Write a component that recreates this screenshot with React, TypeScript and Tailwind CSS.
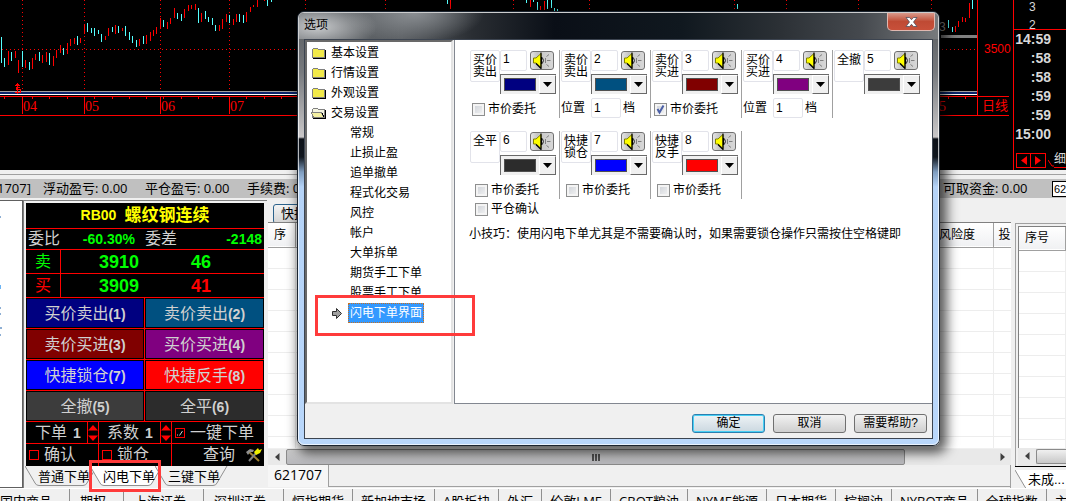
import { useState } from 'react';
import type { ReactNode } from 'react';

type Candle = [x: number, top: number, bottom: number, up: 0 | 1];

// x, top, bottom, 1 = red / 0 = cyan
const candles: Candle[] = [
  [1, 37, 63, 0], [4, 58, 67, 0], [8, 51, 65, 1], [11, 52, 61, 0], [15, 51, 58, 1], [18, 60, 73, 1],
  [22, 51, 67, 0], [25, 60, 68, 1], [29, 62, 70, 0], [32, 58, 69, 1], [35, 54, 60, 1], [39, 52, 61, 0],
  [42, 55, 63, 1], [46, 52, 62, 1], [49, 53, 65, 0], [53, 56, 66, 1], [56, 50, 58, 1], [60, 45, 53, 1],
  [63, 48, 55, 0], [67, 43, 54, 1], [70, 39, 46, 1], [74, 38, 44, 1], [77, 36, 45, 0], [80, 38, 43, 1],
  [84, 24, 34, 1], [87, 23, 32, 0], [91, 28, 33, 0], [94, 28, 36, 0], [98, 30, 34, 0], [101, 34, 42, 0],
  [105, 36, 40, 1], [108, 28, 36, 1], [112, 27, 32, 0], [115, 25, 34, 1], [118, 26, 33, 0], [122, 28, 31, 1],
  [125, 26, 36, 0], [129, 32, 40, 0], [132, 36, 43, 0], [136, 40, 47, 0], [139, 39, 46, 1], [143, 36, 44, 0],
  [146, 35, 44, 1], [150, 32, 41, 1], [153, 30, 36, 1], [156, 27, 34, 1], [160, 18, 29, 1], [163, 20, 27, 0],
  [167, 22, 29, 1], [170, 18, 24, 1], [174, 8, 18, 1], [177, 13, 19, 0], [181, 14, 21, 0], [184, 9, 18, 1],
  [188, 5, 11, 1], [191, 5, 9, 1], [195, 4, 10, 1], [198, 8, 23, 0], [201, 13, 22, 1], [205, 11, 19, 0],
  [208, 17, 22, 0], [212, 18, 25, 0], [215, 25, 31, 0], [219, 25, 31, 1], [222, 19, 29, 1], [226, 14, 22, 1],
  [229, 15, 23, 0], [233, 19, 25, 1], [236, 14, 22, 1], [239, 14, 22, 0], [243, 15, 23, 0], [246, 12, 22, 1],
  [250, 7, 12, 1], [253, 5, 7, 1], [257, 0, 7, 1], [264, 0, 1, 1], [267, 0, 6, 0], [271, 0, 2, 0],
  [447, 0, 4, 0], [450, 0, 9, 1], [526, 0, 3, 0], [530, 0, 7, 1], [533, 0, 2, 0], [537, 2, 10, 0],
  [540, 6, 10, 1], [544, 1, 10, 1], [547, 0, 9, 0], [551, 0, 8, 0], [554, 8, 11, 0], [557, 9, 11, 0],
  [737, 4, 9, 0], [948, 20, 28, 0], [952, 27, 32, 0], [955, 26, 32, 1], [958, 21, 27, 1], [962, 17, 22, 1],
  [965, 18, 22, 1], [969, 3, 18, 1], [972, 0, 9, 0],
];

const gridLines = [22, 84, 160, 229, 305, 385, 450, 513, 589, 734, 786, 858, 931];
const months = [
  { x: 22, label: '04' },
  { x: 84, label: '05' },
  { x: 160, label: '06' },
  { x: 229, label: '07' },
];
const ticks = [4, 32, 49, 67, 94, 112, 129, 146, 163, 181, 198, 212, 246, 264, 281, 948, 965];

const quoteTimes = ['14:59', ':58', ':58', ':59', ':59', '15:00'];

const orderButtons = [
  { text: '买价卖出', key: '(1)', color: 'bg-[#000080]' },
  { text: '卖价卖出', key: '(2)', color: 'bg-[#005080]' },
  { text: '卖价买进', key: '(3)', color: 'bg-[#800000]' },
  { text: '买价买进', key: '(4)', color: 'bg-[#800080]' },
  { text: '快捷锁仓', key: '(7)', color: 'bg-[#0000ff]' },
  { text: '快捷反手', key: '(8)', color: 'bg-[#ff0000]' },
  { text: '全撤', key: '(5)', color: 'bg-[#3c3c3c]' },
  { text: '全平', key: '(6)', color: 'bg-[#2c2c2c]' },
];

const folders = ['基本设置', '行情设置', '外观设置', '交易设置'];
const pages = ['常规', '止损止盈', '追单撤单', '程式化交易', '风控', '帐户', '大单拆单', '期货手工下单', '股票手工下单', '闪电下单界面'];

interface KeyConfig {
  id: string;
  label: string;
  value: string;
  color: string;
  extra?: 'market' | 'position';
  checked?: boolean;
}

const keyRowOne: KeyConfig[] = [
  { id: 'k1', label: '买价卖出', value: '1', color: 'bg-[#000080]', extra: 'market' },
  { id: 'k2', label: '卖价卖出', value: '2', color: 'bg-[#005080]', extra: 'position' },
  { id: 'k3', label: '卖价买进', value: '3', color: 'bg-[#800000]', extra: 'market', checked: true },
  { id: 'k4', label: '买价买进', value: '4', color: 'bg-[#800080]', extra: 'position' },
  { id: 'k5', label: '全撤', value: '5', color: 'bg-[#3c3c3c]' },
];
const keyRowTwo: KeyConfig[] = [
  { id: 'k6', label: '全平', value: '6', color: 'bg-[#2c2c2c]', extra: 'market' },
  { id: 'k7', label: '快捷锁仓', value: '7', color: 'bg-[#0000ff]', extra: 'market' },
  { id: 'k8', label: '快捷反手', value: '8', color: 'bg-[#ff0000]', extra: 'market' },
];

const wideMarkets = ['期权', '上海证券', '深圳证券'];
const markets = ['恒指期货', '新加坡市场', 'A股板块', '外汇', '伦敦LME', 'CBOT粮油', 'NYME能源', '日本期货', '棕榈油', 'NYBOT商品', '全球指数', '主要'];

function Chart() {
  return (
    <svg className="block h-full w-full" shapeRendering="crispEdges">
      <line x1="0" x2="100%" y1="49.5" y2="49.5" stroke="#f00" strokeDasharray="1 3" strokeDashoffset="-2" />
      {gridLines.map((x) => (
        <line key={x} x1={x + 0.5} x2={x + 0.5} y1="0" y2="90" stroke="#f00" strokeDasharray="1 3" />
      ))}
      {candles.map(([x, top, bottom, up]) => (
        <rect key={x} x={x} y={top} width="1" height={bottom - top} fill={up ? '#f00' : '#5ff'} />
      ))}
      <rect x="0" y="91" width="100%" height="1" fill="#a0a0a0" />
      <rect x="0" y="92" width="100%" height="2" fill="#0a246a" />
      <rect x="0" y="94" width="100%" height="1" fill="#fff" />
      <path d="M15 85h5M16 84h3M17 83h1M20 87h-4v2h4v3h-5M17 86v8" stroke="#f00" fill="none" />
      <rect x="0" y="96" width="100%" height="1" fill="#f00" />
      <rect x="0" y="115" width="100%" height="1" fill="#f00" />
      {ticks.map((x) => (
        <rect key={x} x={x} y="97" width="1" height="2" fill="#f00" />
      ))}
      {months.map((m) => (
        <g key={m.label} fill="#f00">
          <rect x={m.x} y="96" width="1" height="18" />
          <text x={m.x + 1} y="111" fontSize="14" fontFamily="Liberation Serif, serif">{m.label}</text>
        </g>
      ))}
      <text x="939" y="31" fontSize="12" fill="#909090" fontFamily="Liberation Sans, sans-serif">3</text>
      <rect x="941" y="35" width="37" height="3" fill="#808080" />
      <text x="939" y="111" fontSize="14" fill="#f00" fontFamily="Liberation Serif, serif">5</text>
    </svg>
  );
}

function PriceAxis() {
  return (
    <div className="w-9 shrink-0 flex flex-col text-[#f00]">
      <div className="h-24 border-l border-[#f00] pt-[41px] pl-[6px] text-[12px] leading-4">3500</div>
      <div className="h-5 mr-1 border-y border-l border-[#f00] pl-1 text-[13px] leading-[18px]">日线</div>
    </div>
  );
}

function QuoteList() {
  return (
    <div className="w-[53px] shrink-0 border-l border-[#f00] flex flex-col text-[#d8d8d8]">
      <div className="h-[30px] border-b border-[#f00] flex flex-col pl-[15px] text-[12px]">
        <span className="h-[15px] leading-[14px]">3</span>
        <span className="h-[14px] leading-[20px] overflow-hidden">2</span>
      </div>
      <div className="w-[37px] text-right font-bold text-[14px] leading-[19px]">
        {quoteTimes.map((t, i) => (
          <div key={i}>{t}</div>
        ))}
      </div>
      <div className="mt-2 pl-[2px] flex items-center">
        <button aria-label="上一页" className="h-[15px] w-4 border border-[#f00] flex items-center justify-center">
          <svg width="6" height="9" viewBox="0 0 6 9"><path d="M6 0v9L0 4.500z" fill="#f00" /></svg>
        </button>
        <button aria-label="下一页" className="h-[15px] w-[15px] border border-l-0 border-[#f00] flex items-center justify-center">
          <svg width="6" height="9" viewBox="0 0 6 9"><path d="M0 0v9l6-4.500z" fill="#f00" /></svg>
        </button>
        <svg width="6" height="13" viewBox="0 0 6 13" className="ml-[2px] shrink-0"><path d="M0 6l4 6h2" fill="none" stroke="#f00" /></svg>
        <span className="text-[12px] leading-[15px] border-b border-[#f00] shrink-0">细</span>
      </div>
    </div>
  );
}

function StatusItem({ name, value }: { name: string; value: string }) {
  return <span className="w-[102px] shrink-0 whitespace-nowrap">{name}: {value}</span>;
}

function StatusBar() {
  return (
    <div className="h-[30px] shrink-0 bg-[#f0f0f0] pt-1">
      <div className="h-px bg-[#a0a0a0]" />
      <div className="h-1 bg-[#f0f0f0]" />
      <div className="h-[19px] bg-[#c0c0c0] flex items-center text-[13px] leading-[19px] text-black font-['Open_Sans','Noto_Sans_CJK_SC',sans-serif]">
        <span className="w-[43px] shrink-0 pr-3 flex justify-end">1707]</span>
        <StatusItem name="浮动盈亏" value="0.00" />
        <StatusItem name="平仓盈亏" value="0.00" />
        <StatusItem name="手续费" value="0.00" />
        <span className="ml-auto w-[109px] shrink-0">可取资金: 0.00</span>
        <select aria-label="账号" className="h-4 w-[14px] shrink-0 appearance-none border border-r-0 border-black bg-white pl-px text-[11px] leading-[14px] font-['Liberation_Sans',sans-serif] text-clip">
          <option>621707</option>
        </select>
      </div>
    </div>
  );
}

function RedCheck({ id, label, defaultChecked }: { id: string; label: string; defaultChecked?: boolean }) {
  return (
    <label htmlFor={id} className="flex items-center gap-[5px] pl-[3px] whitespace-nowrap">
      <span className="relative block size-[10px]">
        <input id={id} type="checkbox" defaultChecked={defaultChecked} className="peer block size-[10px] appearance-none border border-[#f00]" />
        <svg viewBox="0 0 10 10" className="absolute inset-0 hidden size-[10px] peer-checked:block" fill="none" stroke="#d0d0d0">
          <path d="M2 7h1M4.500 7.500L7.500 3" />
        </svg>
      </span>
      {label}
    </label>
  );
}

function Spinner() {
  return (
    <div className="w-3 shrink-0 border-x border-[#f00] flex flex-col items-center justify-center gap-1">
      <button aria-label="增加"><svg width="10" height="6" viewBox="0 0 10 6" className="block"><path d="M5 0l5 5.500H0z" fill="#f00" /></svg></button>
      <button aria-label="减少"><svg width="10" height="6" viewBox="0 0 10 6" className="block"><path d="M5 6l5-5.500H0z" fill="#f00" /></svg></button>
    </div>
  );
}

function OrderTab({ children, active }: { children: ReactNode; active?: boolean }) {
  return (
    <button className="relative h-[21px] w-[65px] shrink-0 pl-[13px] text-left text-[13px] leading-5 whitespace-nowrap text-black">
      <svg width="75" height="20" viewBox="0 0 75 20" className="absolute top-0 left-0">
        <path d="M0 0L10 17Q11 19.500 14 19.500H58Q61 19.500 62 17L72 0" fill={active ? '#fff' : '#f0f0f0'} stroke="#909090" />
      </svg>
      <span className="relative">{children}</span>
    </button>
  );
}

function OrderPanel() {
  return (
    <div className="w-[244px] shrink-0 border-t border-l border-[#808080] flex flex-col">
      <div className="mt-[2px] ml-[2px] mr-[3px] bg-black text-[16px] text-[#d0d0d0]">
        <div className="h-[26px] border-b border-[#f00] flex items-center justify-center gap-2 font-bold text-[17px] text-[#ff0]">
          <span className="text-[14px]">RB00</span>
          <span>螺纹钢连续</span>
        </div>
        <div className="h-[21px] border-b border-[#f00] flex items-center px-[2px] leading-5">
          <span>委比</span>
          <span className="w-[75px] text-right font-bold text-[14px] text-[#0f0]">-60.30%</span>
          <span className="ml-[10px]">委差</span>
          <span className="ml-auto font-bold text-[14px] text-[#0f0]">-2148</span>
        </div>
        <div className="h-6 border-b border-[#f00] grid grid-cols-[35px_116px_48px_1fr] text-center leading-6 text-[#0f0]">
          <span className="border-r border-[#f00]">卖</span>
          <span className="font-bold text-[18px]">3910</span>
          <span className="font-bold text-[18px]">46</span>
        </div>
        <div className="h-6 border-b border-[#f00] grid grid-cols-[35px_116px_48px_1fr] text-center leading-6 text-[#f00]">
          <span className="border-r border-[#f00]">买</span>
          <span className="font-bold text-[18px] text-[#0f0]">3909</span>
          <span className="font-bold text-[18px]">41</span>
        </div>
        <div className="grid grid-cols-2">
          {orderButtons.map((b) => (
            <div key={b.key} className="h-[31px] border-b border-[#f00] odd:border-r p-px">
              <button className={`h-full w-full pt-px leading-[27px] ${b.color}`}>
                {b.text}<b className="text-[14px]">{b.key}</b>
              </button>
            </div>
          ))}
        </div>
        <div className="h-[21px] flex leading-5">
          <div className="w-[61px] shrink-0 pl-[9px] flex items-center gap-[6px]">下单<b className="text-[14px]">1</b></div>
          <Spinner />
          <div className="w-[61px] shrink-0 pl-[8px] flex items-center gap-[6px]">系数<b className="text-[14px]">1</b></div>
          <Spinner />
          <RedCheck id="oneKey" label="一键下单" defaultChecked />
        </div>
        <div className="h-[23px] border-t border-[#f00] flex leading-[20px]">
          <div className="w-[73px] border-r border-[#f00] flex"><RedCheck id="confirm" label="确认" /></div>
          <div className="w-[73px] border-r border-[#f00] flex"><RedCheck id="lock" label="锁仓" /></div>
          <div className="grow flex items-center justify-end gap-[11px] pr-[2px]">
            <button>查询</button>
            <svg width="16" height="14" viewBox="0 0 16 14">
              <path d="M2 3l11 10" stroke="#a08030" strokeWidth="2" />
              <path d="M0 4l4-3 4 1-1 2-3 0-2 3z" fill="#909090" />
              <path d="M3 13l8-9" stroke="#808080" strokeWidth="2" />
              <path d="M8 4l4-4 1 2 3-1-2 4-4 2z" fill="#ee0" />
            </svg>
          </div>
        </div>
      </div>
      <div className="ml-px flex">
        <OrderTab>普通下单</OrderTab>
        <OrderTab active>闪电下单</OrderTab>
        <OrderTab>三键下单</OrderTab>
      </div>
    </div>
  );
}

function ArrowLeft() {
  return <svg width="5" height="8" viewBox="0 0 5 8"><path d="M4.500 0v8L0 4z" fill="#404040" /></svg>;
}

function ArrowRight() {
  return <svg width="5" height="8" viewBox="0 0 5 8"><path d="M.5 0v8L5 4z" fill="#404040" /></svg>;
}

function PositionTable() {
  return (
    <div className="min-w-0 grow flex flex-col pl-px">
      <div className="h-[22px] shrink-0 pt-px pl-[5px]">
        <button className="h-5 w-16 rounded-[3px] border border-[#2c628b] bg-linear-to-b from-[#f4f4f4] to-[#d4d4d4] pl-[7px] text-left text-[13px] leading-[18px]">快捷键</button>
      </div>
      <div className="min-h-0 grow overflow-hidden border-t border-[#808080] bg-white mr-[2px]">
        <table className="w-full table-fixed border-collapse text-left text-[12px]">
          <colgroup>
            <col className="w-[27px]" />
            <col />
            <col className="w-[58px]" />
            <col className="w-[18px]" />
          </colgroup>
          <thead>
            <tr className="h-6 border-b border-[#a0a0a0] bg-linear-to-b from-white to-[#f0f1f3]">
              <th className="border-r border-[#a0a0a0] pl-[6px] font-normal">序</th>
              <th />
              <th className="border-r border-[#a0a0a0] pl-1 font-normal">风险度</th>
              <th className="pl-[5px] font-normal whitespace-nowrap">投</th>
            </tr>
          </thead>
          <tbody>
            {Array.from({ length: 10 }, (_, i) => (
              <tr key={i} className="h-[21px] border-b border-[#ededed]">
                <td className="border-r border-[#ededed]" />
                <td />
                <td className="border-r border-[#ededed]" />
                <td />
              </tr>
            ))}
          </tbody>
        </table>
      </div>
      <div className="h-4 mt-px mr-[2px] shrink-0 bg-[#e9e9e9] flex items-center">
        <button aria-label="向左滚动" className="w-[18px] flex justify-center"><ArrowLeft /></button>
        <div className="h-full w-5/6 rounded-[2px] border border-[#8a8a8a] bg-linear-to-b from-[#c8c8c8] to-[#b8b8bc] flex items-center justify-center gap-px">
          <i className="h-[7px] w-[2px] bg-[#505050]" />
          <i className="h-[7px] w-[2px] bg-[#505050]" />
          <i className="h-[7px] w-[2px] bg-[#505050]" />
        </div>
        <button aria-label="向右滚动" className="ml-auto w-[18px] flex justify-center"><ArrowRight /></button>
      </div>
      <div className="h-[23px] mr-[2px] shrink-0 flex border-r border-[#a0a0a0]">
        <button className="h-[22px] w-[61px] shrink-0 border-r border-[#a0a0a0] bg-[#f6f6f6] text-[14px] leading-[18px] pb-[2px] font-['Open_Sans',sans-serif]">621707</button>
        <div className="h-[22px] grow border-b border-[#a0a0a0]" />
      </div>
    </div>
  );
}

function OrdersTable() {
  return (
    <div className="w-[53px] shrink-0 flex flex-col pl-[2px] pt-[23px]">
      <div className="min-h-0 grow flex flex-col border-t border-l border-[#a0a0a0] pt-[2px] pl-[2px]">
        <div className="min-h-0 grow overflow-hidden border-t border-l border-[#808080] bg-white">
          <table className="w-full table-fixed border-collapse text-left text-[12px]">
            <thead>
              <tr className="h-[23px] border-b border-[#a0a0a0] bg-linear-to-b from-white to-[#f0f1f3]">
                <th className="w-[46px] border-r border-[#a0a0a0] pl-[6px] font-normal whitespace-nowrap">序号</th>
                <th />
              </tr>
            </thead>
            <tbody>
              {Array.from({ length: 10 }, (_, i) => (
                <tr key={i} className="h-[21px] border-b border-[#ededed]">
                  <td className="border-r border-[#ededed]" />
                  <td />
                </tr>
              ))}
            </tbody>
          </table>
        </div>
        <div className="h-[18px] shrink-0 bg-[#e9e9e9] flex items-center pb-[2px]">
          <button aria-label="向左滚动" className="w-[18px] shrink-0 flex justify-center"><ArrowLeft /></button>
          <div className="h-[15px] grow rounded-l-[2px] border border-r-0 border-[#8a8a8a] bg-linear-to-b from-[#f0f0f0] to-[#c8c8c8]" />
        </div>
      </div>
      <div className="h-[22px] shrink-0 border-t border-black overflow-hidden">
        <OrderTab active>未成...</OrderTab>
      </div>
    </div>
  );
}

function MarketBar() {
  return (
    <div className="h-[13px] shrink-0 overflow-hidden border-t border-white bg-[#f0f0f0] flex text-[13px] leading-[24px] font-['Open_Sans','Noto_Sans_CJK_SC',sans-serif] text-black">
      <button className="h-6 shrink-0 border-r border-[#909090] pr-[17px]">国内商品</button>
      {wideMarkets.map((m) => (
        <button key={m} className="h-6 shrink-0 border-r border-[#909090] pl-[10px] pr-[17px]">{m}</button>
      ))}
      {markets.map((m) => (
        <button key={m} className="h-6 shrink-0 border-r border-[#909090] px-2 whitespace-nowrap">{m}</button>
      ))}
    </div>
  );
}

function FolderIcon({ open }: { open?: boolean }) {
  return (
    <svg width="15" height="12" viewBox="0 0 15 12" className="shrink-0" shapeRendering="crispEdges">
      <path d="M14.500 3v8.500H2" fill="none" stroke="#000" />
      <path d="M1.500 10.500V2.500l1-1h4l1 1h6v8z" fill={open ? '#f4f4e0' : '#f2ea4a'} stroke="#808080" />
      {open && <path d="M2.500 10.500L0.500 5.500H10.500L12.500 10.500z" fill="#f4f0a0" stroke="#808080" />}
      {open && <path d="M11 6l2 4" stroke="#000" />}
    </svg>
  );
}

function SettingsTree() {
  const [page, setPage] = useState('闪电下单界面');
  return (
    <nav className="w-[148px] shrink-0 border-2 border-t-[#696969] border-l-[#696969] border-r-[#e3e3e3] border-b-[#e3e3e3] bg-white pt-px text-[12px] leading-5 text-black">
      {folders.map((f) => (
        <button key={f} className="h-5 w-full flex items-center gap-[5px] pl-1">
          <FolderIcon open={f === '交易设置'} />
          {f}
        </button>
      ))}
      {pages.map((p) => (
        <button key={p} onClick={() => setPage(p)} className="h-5 w-full flex items-center pl-[25px]">
          <span className="w-4 shrink-0">
            {p === page && (
              <svg width="10" height="11" viewBox="0 0 10 11">
                <path d="M.5 3.500h4v-3l5 5-5 5v-3h-4z" fill="#a0a0a0" stroke="#303030" />
              </svg>
            )}
          </span>
          <span className={p === page ? 'border border-dotted border-[#c87020] bg-[#3399ff] px-px leading-[18px] text-white' : 'px-[2px]'}>{p}</span>
        </button>
      ))}
    </nav>
  );
}

function CheckBox({ id, label, defaultChecked }: { id: string; label: string; defaultChecked?: boolean }) {
  return (
    <label htmlFor={id} className="flex items-center gap-[3px] whitespace-nowrap">
      <span className="relative block size-[13px]">
        <input id={id} type="checkbox" defaultChecked={defaultChecked} className="peer block size-[13px] appearance-none border border-[#8e8f8f] bg-linear-to-br from-[#cbcfd5] to-[#f6f6f6] ring-2 ring-inset ring-[#f4f4f4]" />
        <svg viewBox="0 0 13 13" className="absolute inset-0 hidden size-[13px] peer-checked:block" fill="none" stroke="#4b5fa6" strokeWidth="2">
          <path d="M3.500 6l2 3.500L9.500 2.500" />
        </svg>
      </span>
      {label}
    </label>
  );
}

function SoundButton({ label }: { label: string }) {
  return (
    <button aria-label={`${label}声音`} className="h-[19px] w-6 shrink-0 rounded-[3px] border border-[#707070] bg-linear-to-r from-[#e4e4e4] via-[#c4c4c4] via-30% to-[#d8d8d8] flex items-center justify-center">
      <svg width="20" height="17" viewBox="0 0 20 17">
        <path d="M1.500 6h2.500l5-4.500v14l-5-4.500h-2.500z" fill="#ff0" stroke="#808000" />
        <path d="M4 11.500l5 5V.5" fill="none" stroke="#000" strokeWidth="1.200" />
        <path d="M9.500 5q3.500 3.500 0 7z" fill="#fff" stroke="#000" />
        <path d="M14.500 4.500l2.500-2M15 8.500h3.500M14.500 12.500l2.500 2M13.500 6v5" fill="none" stroke="#808080" />
      </svg>
    </button>
  );
}

function ColorSelect({ label, color }: { label: string; color: string }) {
  return (
    <div className="relative h-5 w-14 border-t border-l border-[#696969] bg-[#f0f0f0] flex">
      <div className="grow p-[3px]">
        <div className={`h-[13px] border border-[#505050] ${color}`} />
      </div>
      <div className="w-[17px] border border-t-white border-l-white border-r-[#696969] border-b-[#696969] flex items-center justify-center">
        <svg width="9" height="5" viewBox="0 0 9 5"><path d="M0 0h9L4.500 5z" fill="#000" /></svg>
      </div>
      <select aria-label={`${label}颜色`} className="absolute inset-0 w-full opacity-0"><option>{label}</option></select>
    </div>
  );
}

function KeyGroup({ cfg, indent }: { cfg: KeyConfig; indent?: boolean }) {
  return (
    <div className="h-[68px] w-[91px] pl-px border-r border-[#a0a0a0] nth-5:border-r-0">
      <div className="flex">
        <label htmlFor={cfg.id} className="h-8 w-[30px] shrink-0 rounded-[2px] border border-[#e2e3ea] pt-[3px] pl-[2px] text-[12px] leading-3">{cfg.label}</label>
        <div className="shrink-0">
          <div className="flex items-center gap-[3px]">
            <input id={cfg.id} defaultValue={cfg.value} className="h-[21px] w-[27px] rounded-[2px] border border-[#e2e3ea] bg-white pl-[2px] pb-[3px] text-[12px]" />
            <SoundButton label={cfg.label} />
          </div>
          <div className="mt-[3px]"><ColorSelect label={cfg.label} color={cfg.color} /></div>
        </div>
      </div>
      {cfg.extra === 'market' && (
        <div className={indent ? 'mt-[6px] pl-[5px]' : 'mt-[6px] pl-[2px]'}>
          <CheckBox id={`${cfg.id}-market`} label="市价委托" defaultChecked={cfg.checked} />
        </div>
      )}
      {cfg.extra === 'position' && (
        <div className="mt-1 flex items-center">
          <label htmlFor={`${cfg.id}-pos`} className="w-[30px]">位置</label>
          <input id={`${cfg.id}-pos`} defaultValue="1" className="h-5 w-[30px] rounded-[2px] border border-[#e2e3ea] bg-white pl-[2px] pb-px text-[12px]" />
          <span className="pl-[2px]">档</span>
        </div>
      )}
    </div>
  );
}

function KeySettings() {
  return (
    <section className="min-w-0 grow border-l border-b border-[#828790] bg-white pl-[14px] pt-[10px] text-[12px] leading-[18px] text-black">
      <div className="flex">
        {keyRowOne.map((k) => <KeyGroup key={k.id} cfg={k} />)}
      </div>
      <div className="mt-[13px] flex">
        {keyRowTwo.map((k) => <KeyGroup key={k.id} cfg={k} indent />)}
      </div>
      <div className="mt-px pl-[6px]"><CheckBox id="closeConfirm" label="平仓确认" /></div>
      <p className="mt-[7px] whitespace-nowrap">小技巧：使用闪电下单尤其是不需要确认时，如果需要锁仓操作只需按住空格键即</p>
    </section>
  );
}

function OptionsDialog() {
  return (
    <div
      role="dialog"
      aria-label="选项"
      className="absolute top-[11px] left-[297px] w-[643px] rounded-[7px] border border-[#1c2530] bg-[linear-gradient(to_bottom,#55585b_0px,#777a7e_60px,#c9c7c8_125px,#0c1118_127px,#10161e_145px,#7f9dbf_160px,#b5d3f7_175px,#b9d7fb_100%)] shadow-[4px_4px_12px_3px_rgba(0,0,0,0.65)]"
    >
      <div className="rounded-[6px] border border-white/70 px-[5px] pb-[5px]">
        <div className="-mx-[5px] h-[26px] rounded-t-[5px] bg-[radial-gradient(ellipse_60px_24px_at_18px_14px,#c8cacc,transparent),radial-gradient(ellipse_70px_30px_at_115px_0px,#8a8e92,transparent),linear-gradient(to_right,#63676b_0%,#5a5e62_16%,#2a2e33_27%,#0a0f17_40%,#10181f_60%,#2b3035_75%,#45494e_88%,#777a7d_100%)] pl-[5px] flex items-start justify-between pr-[3px]">
          <h1 className="pt-[2px] text-[12px] leading-[20px] text-black">选项</h1>
          <button aria-label="关闭" className="h-[18px] w-[48px] rounded-b-[5px] border border-t-0 border-[#e0b8b0] bg-linear-to-b from-[#d8988a] via-[#bf4a34] via-50% to-[#c8503a] flex items-center justify-center">
            <svg width="13" height="10" viewBox="0 0 13 10">
              <path d="M1 .5h3.500l2 2.200 2-2.200H12L8.500 5l3.500 4.500H8.500l-2-2.200-2 2.200H1L4.500 5z" fill="#fff" stroke="#505060" strokeWidth=".8" />
            </svg>
          </button>
        </div>
        <div className="border border-[#3c4450] bg-[#f0f0f0]">
          <div className="flex h-[364px]">
            <SettingsTree />
            <div className="w-px" />
            <KeySettings />
          </div>
          <div className="h-[34px] flex items-center justify-end gap-2 pr-[5px] pt-1 text-[12px] leading-[17px] text-black">
            <button className="h-[19px] w-[73px] rounded-[3px] border border-[#2c7fb0] bg-linear-to-b from-[#eef3f6] to-[#cbd8e0] ring-1 ring-inset ring-[#48d0f4]">确定</button>
            <button className="h-[19px] w-[73px] rounded-[3px] border border-[#707070] bg-linear-to-b from-[#f2f2f2] to-[#cfcfcf]">取消</button>
            <button className="h-[19px] w-[73px] rounded-[3px] border border-[#707070] bg-linear-to-b from-[#f2f2f2] to-[#cfcfcf]">需要帮助?</button>
          </div>
        </div>
      </div>
    </div>
  );
}

export default function App() {
  return (
    <div className="relative h-screen overflow-hidden flex flex-col bg-[#f0f0f0] font-['Liberation_Sans','Noto_Sans_CJK_SC',sans-serif]">
      <div className="h-[170px] shrink-0 flex bg-black">
        <div className="min-w-0 grow"><Chart /></div>
        <PriceAxis />
        <QuoteList />
      </div>
      <StatusBar />
      <div className="min-h-0 grow flex">
        <div className="w-[23px] shrink-0 border-t border-r border-b border-[#606060] bg-white">
          <svg width="3" height="140" className="block">
            <path d="M0 16h1M0 107h1M0 113h1M0 127h2M0 134h1" stroke="#1c5fa8" />
            <path d="M0 84h1v4h-1z" fill="#6cb4f4" />
          </svg>
        </div>
        <OrderPanel />
        <PositionTable />
        <OrdersTable />
      </div>
      <MarketBar />

      <OptionsDialog />

      {/* callout frames */}
      <div className="pointer-events-none absolute top-[295px] left-[315px] h-[41px] w-[160px] border-3 border-[#ff3b3b]" />
      <div className="pointer-events-none absolute top-[460px] left-[89px] h-[32px] w-[72px] border-3 border-[#ff3b3b]" />
    </div>
  );
}
